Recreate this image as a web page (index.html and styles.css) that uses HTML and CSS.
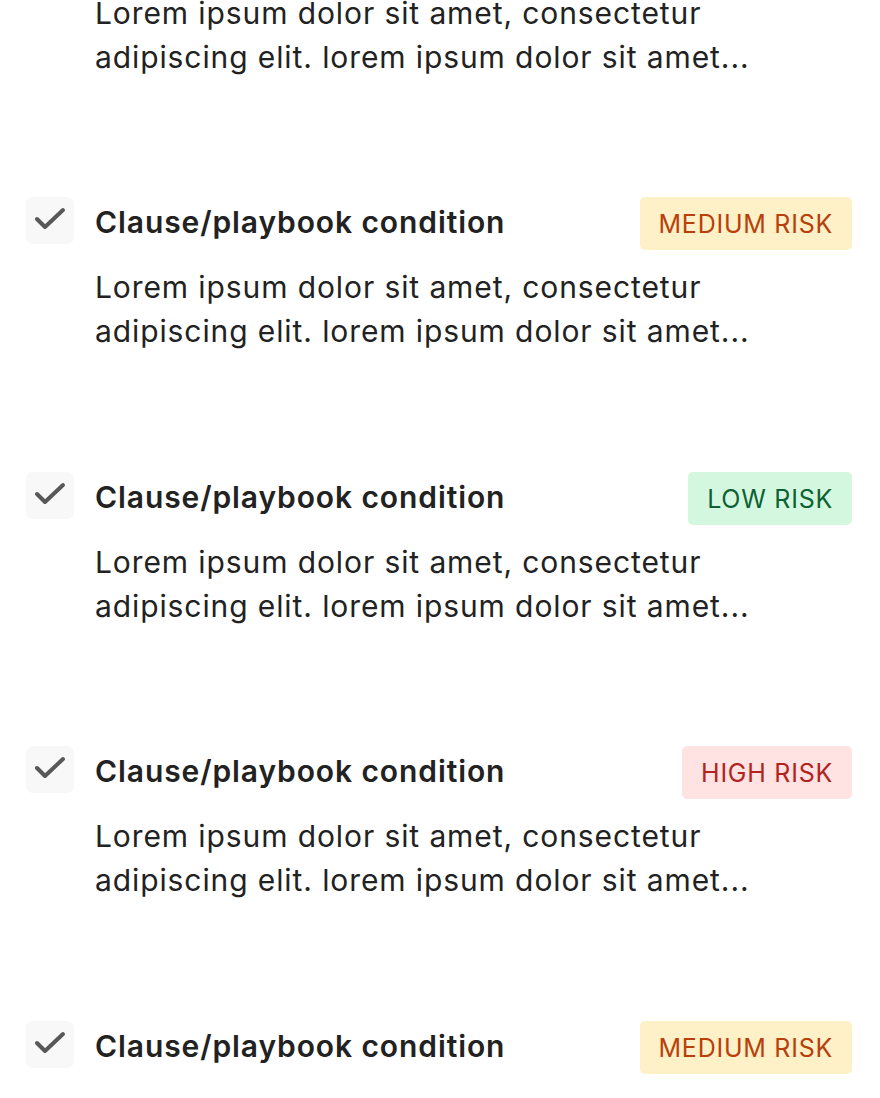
FILE: index.html
```html
<!DOCTYPE html>
<html lang="en">
<head>
    <meta charset="UTF-8">
    <meta name="viewport" content="width=device-width, initial-scale=1.0">
    <title>Clause checks</title>
    <link rel="stylesheet" href="styles.css">
</head>
<body>
    <ul class="clause-list">
        <li class="clause">
            <div class="clause-head">
                <span class="check"><svg viewBox="0 0 48 48"><path d="M11 22l8 8 18-17"/></svg></span>
                <h3 class="clause-title">Clause/playbook condition</h3>
                <span class="risk risk-medium">Medium risk</span>
            </div>
            <p class="clause-text">Lorem ipsum dolor sit amet, consectetur adipiscing elit. lorem ipsum dolor sit amet...</p>
        </li>
        <li class="clause">
            <div class="clause-head">
                <span class="check"><svg viewBox="0 0 48 48"><path d="M11 22l8 8 18-17"/></svg></span>
                <h3 class="clause-title">Clause/playbook condition</h3>
                <span class="risk risk-medium">Medium risk</span>
            </div>
            <p class="clause-text">Lorem ipsum dolor sit amet, consectetur adipiscing elit. lorem ipsum dolor sit amet...</p>
        </li>
        <li class="clause">
            <div class="clause-head">
                <span class="check"><svg viewBox="0 0 48 48"><path d="M11 22l8 8 18-17"/></svg></span>
                <h3 class="clause-title">Clause/playbook condition</h3>
                <span class="risk risk-low">Low risk</span>
            </div>
            <p class="clause-text">Lorem ipsum dolor sit amet, consectetur adipiscing elit. lorem ipsum dolor sit amet...</p>
        </li>
        <li class="clause">
            <div class="clause-head">
                <span class="check"><svg viewBox="0 0 48 48"><path d="M11 22l8 8 18-17"/></svg></span>
                <h3 class="clause-title">Clause/playbook condition</h3>
                <span class="risk risk-high">High risk</span>
            </div>
            <p class="clause-text">Lorem ipsum dolor sit amet, consectetur adipiscing elit. lorem ipsum dolor sit amet...</p>
        </li>
        <li class="clause">
            <div class="clause-head">
                <span class="check"><svg viewBox="0 0 48 48"><path d="M11 22l8 8 18-17"/></svg></span>
                <h3 class="clause-title">Clause/playbook condition</h3>
                <span class="risk risk-medium">Medium risk</span>
            </div>
            <p class="clause-text">Lorem ipsum dolor sit amet, consectetur adipiscing elit. lorem ipsum dolor sit amet...</p>
        </li>
    </ul>
</body>
</html>
```

FILE: styles.css
```css
* {
    margin: 0;
    padding: 0;
    box-sizing: border-box;
}

body {
    font-family: Inter, 'Noto Sans', sans-serif;
    background: #ffffff;
    color: #222222;
    overflow: hidden;
}

.clause-list {
    list-style: none;
    margin-top: -77.5px;
    padding: 0 28px 0 26px;
}

.clause {
    padding-bottom: 118.5px;
}

.clause-head {
    display: flex;
    align-items: flex-start;
    gap: 21px;
}

.check {
    flex: none;
    width: 48px;
    height: 47px;
    border-radius: 7px;
    background: #f8f8f8;
    display: flex;
}

.check svg {
    width: 48px;
    height: 48px;
    fill: none;
    stroke: #585858;
    stroke-width: 4;
    stroke-linecap: round;
    stroke-linejoin: round;
}

.clause-title {
    flex: 1;
    font-size: 30px;
    font-weight: 600;
    letter-spacing: 0.9px;
    line-height: 53px;
    color: #222222;
    margin-top: -1px;
}

.risk {
    flex: none;
    height: 53px;
    padding: 0 19px;
    border-radius: 5px;
    font-size: 25px;
    line-height: 54px;
    text-transform: uppercase;
    letter-spacing: 0.75px;
}

.risk-medium {
    background: #fef0c7;
    color: #b93f0b;
}

.risk-low {
    background: #d3f8df;
    color: #0e6133;
}

.risk-high {
    background: #fee3e2;
    color: #b3231d;
}

.clause-text {
    margin: 15px 0 0 69px;
    max-width: 690px;
    font-size: 30px;
    letter-spacing: 0.9px;
    line-height: 44px;
    color: #222222;
}
```
